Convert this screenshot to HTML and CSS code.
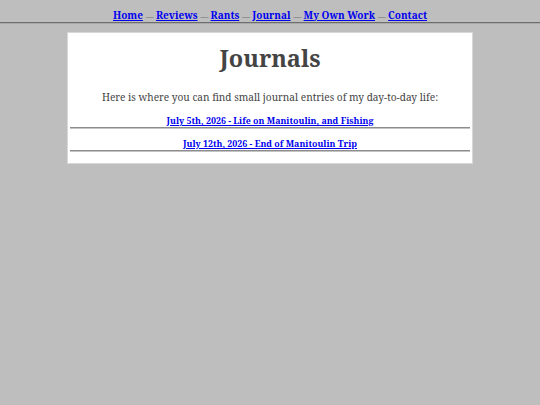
FILE: index.html
```html
<!DOCTYPE html>
<html>
<head>
<meta charset="utf-8">
<link rel="stylesheet" href="styles.css">
</head>
<body>
<nav class="nav">
<a href="#">Home</a> <span class="sep">-----</span> <a href="#">Reviews</a> <span class="sep">-----</span> <a href="#">Rants</a> <span class="sep">-----</span> <a href="#">Journal</a> <span class="sep">-----</span> <a href="#">My Own Work</a> <span class="sep">-----</span> <a href="#">Contact</a>
</nav>
<hr class="rule">
<main class="card">
<h1 class="title">Journals</h1>
<p class="intro">Here is where you can find small journal entries of my day-to-day life:</p>
<div class="entry"><a href="#">July 5th, 2026 - Life on Manitoulin, and Fishing</a></div>
<hr class="line">
<div class="entry"><a href="#">July 12th, 2026 - End of Manitoulin Trip</a></div>
<hr class="line">
</main>
</body>
</html>
```
FILE: styles.css
```css
html, body {
  margin: 0;
  padding: 0;
  background: #bebebe;
  font-family: "Noto Serif", serif;
  color: #444;
}
.nav {
  text-align: center;
  font-size: 10px;
  font-weight: bold;
  padding-top: 8px;
  height: 22px;
  box-sizing: border-box;
  line-height: 14px;
  overflow: hidden;
}
.nav a {
  color: #0000ee;
}
.sep {
  font-weight: normal;
  color: #777;
  font-size: 7px;
  line-height: 1;
  letter-spacing: -0.6px;
}
.rule {
  margin: 0;
  border: 0;
  border-top: 1px solid #6e6e6e;
  border-bottom: 1px solid #a8a8a8;
}
.card {
  width: 406px;
  margin: 8px auto 0;
  background: #fff;
  border: 1px solid #d8d8d8;
  box-sizing: border-box;
  padding: 8px 2px 11px;
  text-align: center;
}
.title {
  margin: 0;
  font-size: 23.5px;
  line-height: 34px;
  color: #444;
}
.intro {
  margin: 15px 0 11px;
  font-size: 10.1px;
  line-height: 14px;
}
.entry {
  font-size: 8.85px;
  line-height: 12px;
  font-weight: bold;
}
.entry a { color: #0000ee; }
.line {
  margin: 0 0 9px;
  border: 0;
  border-top: 1px solid #8c8c8c;
  border-bottom: 1px solid #c4c4c4;
}
.line:last-child { margin-bottom: 0; }
```
